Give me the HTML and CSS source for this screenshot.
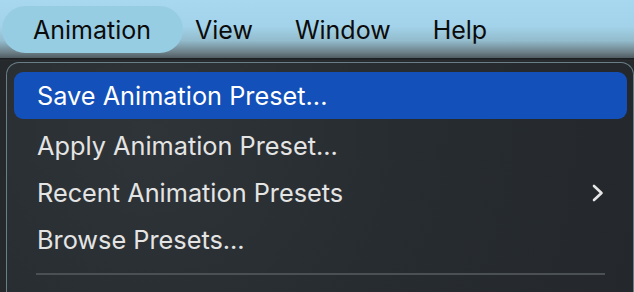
FILE: index.html
```html
<!DOCTYPE html>
<html>
<head>
<meta charset="utf-8">
<link rel="stylesheet" href="styles.css">
</head>
<body>
<div class="menubar">
  <div class="mb-item active">Animation</div>
  <div class="mb-item view">View</div>
  <div class="mb-item window">Window</div>
  <div class="mb-item help">Help</div>
</div>
<div class="rule"></div>
<div class="area">
  <div class="menu">
    <div class="item selected">Save Animation Preset...</div>
    <div class="item">Apply Animation Preset...</div>
    <div class="item sub">Recent Animation Presets
      <svg class="chev" width="14" height="20" viewBox="0 0 14 20"><path d="M3 3 L10.5 10 L3 17" fill="none" stroke="#e6e6e6" stroke-width="2.6" stroke-linecap="round" stroke-linejoin="round"/></svg>
    </div>
    <div class="item">Browse Presets...</div>
    <div class="sep"></div>
  </div>
</div>
</body>
</html>
```
FILE: styles.css
```css
html, body {
  margin: 0;
  padding: 0;
}
body {
  width: 634px;
  height: 292px;
  overflow: hidden;
  background: #1f2326;
  font-family: Inter, "Noto Sans", "Liberation Sans", sans-serif;
}
.menubar {
  height: 58px;
  display: flex;
  align-items: center;
  background: linear-gradient(to bottom, #a8d8ef 0%, #a3d3ea 45%, #93bccd 70%, #6d8088 90%, #505c62 100%);
  box-sizing: border-box;
  padding-left: 2px;
}
.mb-item {
  font-size: 25px;
  color: #0b0b0b;
  height: 47px;
  display: flex;
  align-items: center;
  margin-top: 1px;
}
.mb-item.active {
  background: #97cde3;
  border-radius: 24px;
  padding: 0 31px;
  width: 181px;
  box-sizing: border-box;
}
.mb-item.view { margin-left: 12px; }
.mb-item.window { margin-left: 42px; }
.mb-item.help { margin-left: 42px; }
.rule {
  height: 3px;
  background: linear-gradient(to bottom, #1a1c1e, #2b2f32);
}
.area {
  padding-left: 6px;
  padding-top: 1px;
  background: #25292c;
  height: 231px;
}
.menu {
  height: 240px;
  border: 1px solid #6a7e88;
  border-bottom: none;
  border-radius: 13px 13px 0 0;
  background: radial-gradient(circle at 140px 70px, #2e3438 0%, #272c30 50%, #24282c 100%);
  padding: 9px 6px 0 7px;
  box-sizing: border-box;
}
.item {
  height: 47px;
  display: flex;
  align-items: center;
  padding-left: 23px;
  font-size: 25.3px;
  color: #e4e4e4;
  border-radius: 9px;
}
.item.selected {
  background: #1350b9;
  color: #ffffff;
  margin-bottom: 3px;
}
.item.sub {
  justify-content: space-between;
  padding-right: 22px;
}
.sep {
  height: 2px;
  background: #4a5054;
  margin: 10px 22px 0 22px;
}
```
